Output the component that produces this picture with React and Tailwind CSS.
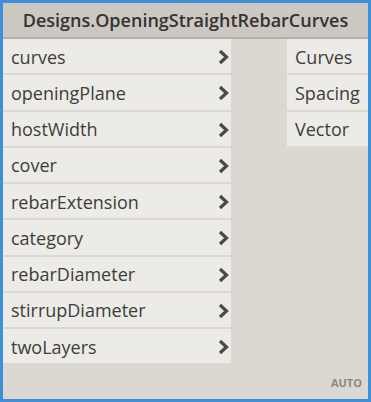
import React from 'react';

const inputs = [
  'curves',
  'openingPlane',
  'hostWidth',
  'cover',
  'rebarExtension',
  'category',
  'rebarDiameter',
  'stirrupDiameter',
  'twoLayers',
];

const outputs = ['Curves', 'Spacing', 'Vector'];

const Chevron = () => (
  <svg width="12" height="16" viewBox="0 0 12 16" className="shrink-0">
    <path d="M3 2 L9.5 8 L3 14" fill="none" stroke="#4a4a4a" strokeWidth="3.2" />
  </svg>
);

export default function App() {
  return (
    <div
      className="w-[371px] h-[402px] border-[3px] border-[#3d8fd8] bg-[#dbd8d2] flex flex-col"
      style={{ fontFamily: '"Open Sans", sans-serif' }}
    >
      {/* Title */}
      <div className="h-[36px] shrink-0 bg-[#ccc8c1] border-b-2 border-[#b3afa9] flex items-center justify-center text-[18px] font-semibold text-[#333333]">
        Designs.OpeningStraightRebarCurves
      </div>

      <div className="flex flex-1 justify-between">
        {/* Inputs */}
        <div className="w-[228px] flex flex-col gap-[2px]">
          {inputs.map((name) => (
            <div
              key={name}
              className="h-[34.25px] bg-[#edebe7] flex items-center justify-between pl-[8px] pr-[2px] pt-[2px] text-[18px] text-[#3d3d3d]"
            >
              <span>{name}</span>
              <Chevron />
            </div>
          ))}
        </div>

        {/* Outputs */}
        <div className="w-[81px] flex flex-col gap-[2px]">
          {outputs.map((name) => (
            <div
              key={name}
              className="h-[34.25px] bg-[#edebe7] flex items-center pl-[8px] pt-[2px] text-[18px] text-[#3d3d3d]"
            >
              {name}
            </div>
          ))}
        </div>
      </div>

      <div className="h-[31px] shrink-0 flex items-center justify-end pr-[6px] text-[11px] font-bold text-[#8a8782]">
        AUTO
      </div>
    </div>
  );
}
